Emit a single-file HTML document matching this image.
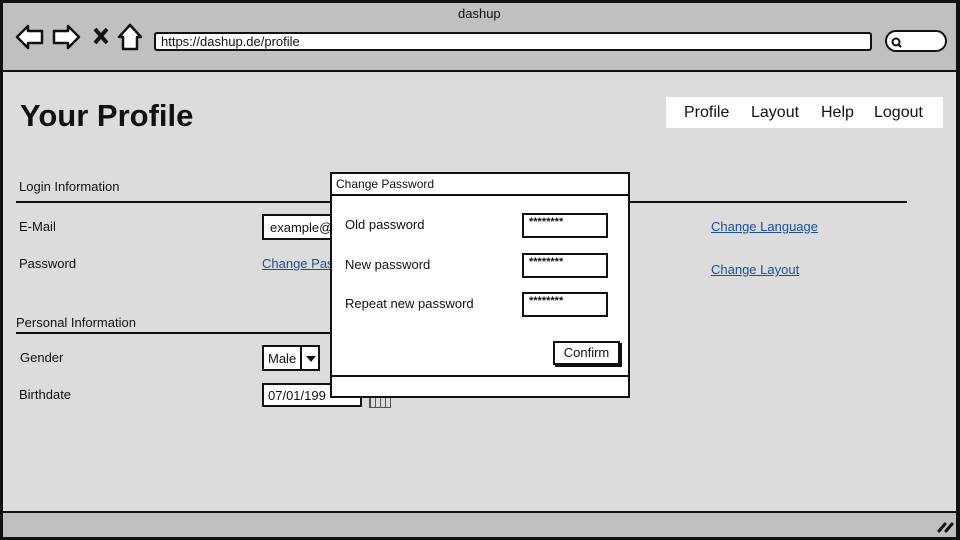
<!DOCTYPE html>
<html><head><meta charset="utf-8"><style>
*{margin:0;padding:0;box-sizing:border-box}
body{width:960px;height:540px;position:relative;overflow:hidden;background:#dcdcdc;font-family:"Liberation Sans",sans-serif;color:#111;font-size:13px}
.a{position:absolute}
.box{position:absolute;background:#fff;border:2px solid #111}
a{color:#1a4f9c;text-decoration:underline}
</style></head><body>
<div class="a" style="left:0;top:0;width:960px;height:72px;background:#c0c0c0;border-bottom:2px solid #111"></div>
<div class="a" style="left:0;top:0;width:960px;height:540px;border:3px solid #111;border-right-width:4px"></div>
<div class="a" style="left:458px;top:6px;font-size:13px">dashup</div>
<svg class="a" style="left:14px;top:22px" width="130" height="30" viewBox="0 0 130 30">
<path d="M3 15 L14 4 L14 9 L28 9 L28 21 L14 21 L14 26 Z" fill="#fff" stroke="#111" stroke-width="2.5" stroke-linejoin="round"/>
<path d="M65 15 L54 4 L54 9 L40 9 L40 21 L54 21 L54 26 Z" fill="#fff" stroke="#111" stroke-width="2.5" stroke-linejoin="round"/>
<path d="M81 7 L93 21 M93 7 L81 21" stroke="#111" stroke-width="4"/>
<path d="M116 3 L105 15 L109 15 L109 27 L123 27 L123 15 L127 15 Z" fill="#fff" stroke="#111" stroke-width="2.5" stroke-linejoin="round"/>
</svg>
<div class="box" style="left:154px;top:32px;width:718px;height:19px;border-radius:3px;font-size:13px;padding-left:5px;line-height:15px">https://dashup.de/profile</div>
<div class="box" style="left:885px;top:30px;width:62px;height:22px;border-radius:11px"></div>
<svg class="a" style="left:890px;top:36px" width="14" height="12"><circle cx="6" cy="6" r="3.5" fill="none" stroke="#111" stroke-width="2"/><path d="M8 8 L11 11" stroke="#111" stroke-width="2"/></svg>
<div class="a" style="left:20px;top:98px;font-size:31px;font-weight:bold">Your Profile</div>
<div class="a" style="left:666px;top:97px;width:277px;height:31px;background:#fff;font-size:16px;line-height:31px;word-spacing:0"><span style="position:absolute;left:18px">Profile</span><span style="position:absolute;left:85px">Layout</span><span style="position:absolute;left:155px">Help</span><span style="position:absolute;left:208px">Logout</span></div>
<div class="a" style="left:19px;top:179px">Login Information</div>
<div class="a" style="left:16px;top:201px;width:891px;height:2px;background:#111"></div>
<div class="a" style="left:19px;top:219px">E-Mail</div>
<div class="box" style="left:262px;top:214px;width:80px;height:26px;padding:4px 6px">example@</div>
<div class="a" style="left:19px;top:256px">Password</div>
<a class="a" style="left:262px;top:256px">Change Pas</a>
<a class="a" style="left:711px;top:219px">Change Language</a>
<a class="a" style="left:711px;top:262px">Change Layout</a>
<div class="a" style="left:16px;top:315px">Personal Information</div>
<div class="a" style="left:16px;top:332px;width:320px;height:2px;background:#111"></div>
<div class="a" style="left:20px;top:350px">Gender</div>
<div class="box" style="left:262px;top:345px;width:58px;height:26px;padding:4px 4px">Male</div>
<div class="a" style="left:300px;top:346px;width:2px;height:24px;background:#111"></div>
<div class="a" style="left:306px;top:356px;border:5px solid transparent;border-top:6px solid #111;width:0;height:0"></div>
<div class="a" style="left:19px;top:387px">Birthdate</div>
<div class="box" style="left:262px;top:383px;width:100px;height:24px;padding:3px 4px">07/01/199</div>
<div class="a" style="left:369px;top:396px;width:22px;height:12px;border:1px solid #555;background:repeating-linear-gradient(90deg,#555 0 1px,transparent 1px 5px)"></div>
<div class="box" style="left:330px;top:172px;width:300px;height:226px"></div>
<div class="a" style="left:336px;top:177px;font-size:12px">Change Password</div>
<div class="a" style="left:331px;top:194px;width:298px;height:2px;background:#111"></div>
<div class="a" style="left:331px;top:375px;width:298px;height:2px;background:#111"></div>
<div class="a" style="left:345px;top:217px">Old password</div>
<div class="a" style="left:345px;top:257px">New password</div>
<div class="a" style="left:345px;top:296px">Repeat new password</div>
<div class="box" style="left:522px;top:213px;width:86px;height:25px;font-size:11px;padding:1px 5px;font-weight:bold">********</div>
<div class="box" style="left:522px;top:253px;width:86px;height:25px;font-size:11px;padding:1px 5px;font-weight:bold">********</div>
<div class="box" style="left:522px;top:292px;width:86px;height:25px;font-size:11px;padding:1px 5px;font-weight:bold">********</div>
<div class="box" style="left:553px;top:341px;width:67px;height:24px;text-align:center;line-height:19px;box-shadow:2px 2px 0 #111">Confirm</div>
<div class="a" style="left:0;top:511px;width:960px;height:29px;background:#c0c0c0;border-top:2px solid #111;border-bottom:3px solid #111;border-left:3px solid #111;border-right:4px solid #111"></div>
<svg class="a" style="left:937px;top:520px" width="18" height="14"><path d="M2 11 L8 4 M9 11 L15 4" stroke="#111" stroke-width="3" stroke-linecap="round"/></svg>
</body></html>
